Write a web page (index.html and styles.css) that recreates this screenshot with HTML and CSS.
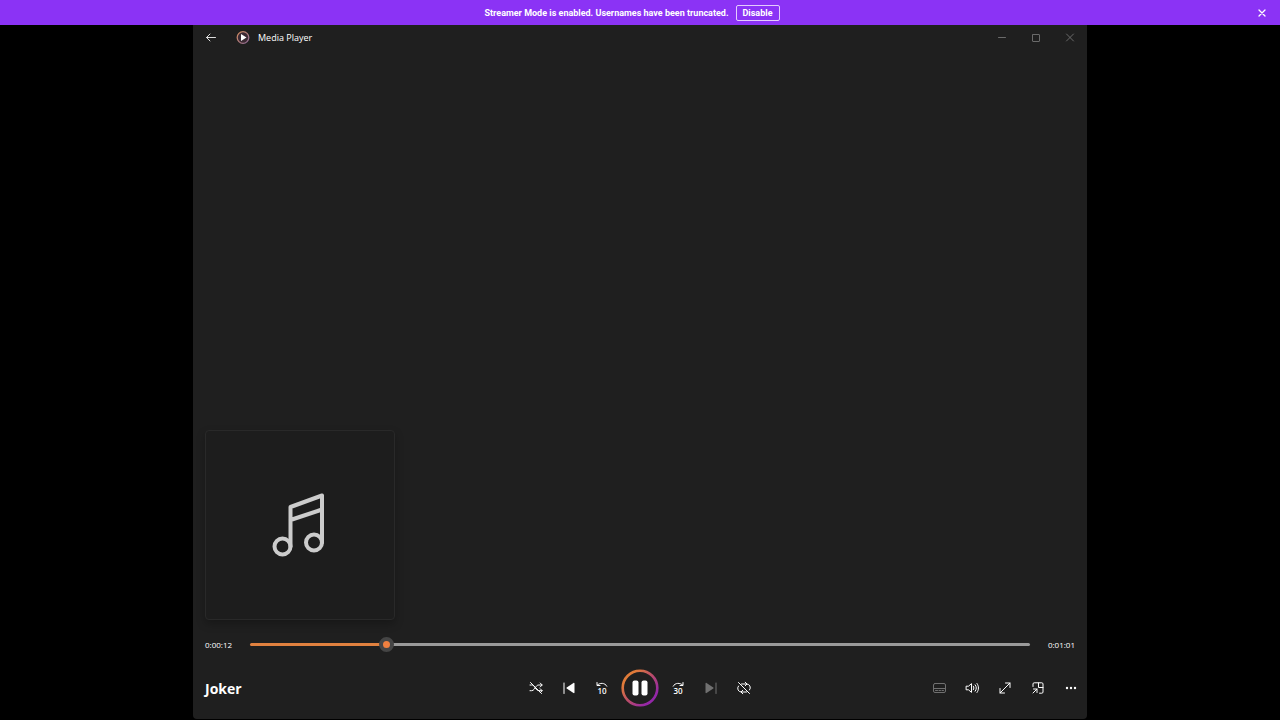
FILE: index.html
```html
<!DOCTYPE html>
<html lang="en">
<head>
    <meta charset="UTF-8">
    <meta name="viewport" content="width=device-width, initial-scale=1.0">
    <title>Media Player</title>
    <link rel="stylesheet" href="styles.css">
</head>
<body>
    <div class="notice">
        <div class="notice-text">
            <span>Streamer Mode is enabled. Usernames have been truncated.</span>
            <button class="notice-disable" type="button">Disable</button>
        </div>
        <button class="notice-close" type="button" aria-label="Close notice">
            <svg width="8" height="8" viewBox="0 0 8 8"><path d="M1 1l6 6M7 1L1 7" stroke-width="1.3"/></svg>
        </button>
    </div>

    <main class="window">
        <header class="titlebar">
            <button class="back" type="button" aria-label="Back">
                <svg width="12" height="12" viewBox="0 0 12 12"><path d="M10.5 5.5h-9M5 2L1.5 5.500 5 9"/></svg>
            </button>
            <svg class="app-icon" width="14" height="14" viewBox="0 0 14 14">
                <defs>
                    <linearGradient id="appRing" x1="0" y1="0" x2="1" y2="1">
                        <stop offset="0" stop-color="#d08a5c"/>
                        <stop offset="1" stop-color="#8d6a98"/>
                    </linearGradient>
                </defs>
                <circle cx="7" cy="6.5" r="5.8" fill="#3b2a33" stroke="url(#appRing)" stroke-width="1.3"/>
                <path d="M5 3v7l5.500-3.500z" fill="#fff" stroke="none"/>
            </svg>
            <h1>Media Player</h1>
            <div class="window-buttons">
                <button type="button" aria-label="Minimize">
                    <svg width="10" height="10" viewBox="0 0 10 10"><path d="M1.5 4.5h7"/></svg>
                </button>
                <button type="button" aria-label="Maximize">
                    <svg width="10" height="10" viewBox="0 0 10 10"><rect x="1.5" y="1.5" width="7" height="7" rx="0.5"/></svg>
                </button>
                <button type="button" aria-label="Close">
                    <svg width="10" height="10" viewBox="0 0 10 10"><path d="M1.5 1l7 7M8.5 1l-7 7"/></svg>
                </button>
            </div>
        </header>

        <section class="stage">
            <div class="cover">
                <svg width="58" height="66" viewBox="0 0 58 66">
                    <circle cx="11.5" cy="54.5" r="8"/>
                    <circle cx="43" cy="50.5" r="8"/>
                    <path d="M19.5 54.5V15L51 3.5v47M19.5 28L51 17.5"/>
                </svg>
            </div>
        </section>

        <div class="seek">
            <label for="position">0:00:12</label>
            <input class="seek-bar" id="position" type="range" min="0" max="61" step="0.1" value="10.3" style="--played: 17%">
            <span>0:01:01</span>
        </div>

        <footer class="controls">
            <h2>Joker</h2>
            <div class="transport">
                <button type="button" aria-label="Shuffle">
                    <svg width="16" height="16" viewBox="0 0 16 16"><path d="M2 5h1.500c1.200 0 2 .4 2.700 1.400l2 2.800c.7 1 1.600 1.500 2.800 1.500h3M2 10.700h1.500c1.200 0 2-.5 2.700-1.500l2-2.800C8.900 5.400 9.800 5 11 5h3M12.200 3L14.200 5l-2 2M12.200 8.700l2 2-2 2M2.500 2.500l11 11"/></svg>
                </button>
                <button type="button" aria-label="Previous">
                    <svg width="16" height="16" viewBox="0 0 16 16"><path d="M3 3v10.500"/><path class="solid" d="M13.500 3.400v9.200c0 .6-.6.8-1 .5L5.700 8.500a.6.6 0 0 1 0-1l6.800-4.600c.4-.3 1-.1 1 .5z"/></svg>
                </button>
                <button type="button" aria-label="Skip back 10 seconds">
                    <svg width="16" height="16" viewBox="0 0 16 16"><path d="M3 2.500v3h3M3.200 5.200C5.800 2.500 11 2.500 12.800 6.200"/><text x="8" y="14">10</text></svg>
                </button>
                <button class="pause" type="button" aria-label="Pause">
                    <svg width="38" height="38" viewBox="0 0 38 38">
                        <defs>
                            <linearGradient id="ring" x1="0.15" y1="0.25" x2="0.8" y2="0.85">
                                <stop offset="0" stop-color="#e07b39"/>
                                <stop offset="0.5" stop-color="#b84a6c"/>
                                <stop offset="1" stop-color="#9427a8"/>
                            </linearGradient>
                        </defs>
                        <circle cx="19" cy="19" r="17.3" stroke="url(#ring)" stroke-width="2.6"/>
                        <rect class="solid" x="11.5" y="11.5" width="6" height="15" rx="2"/>
                        <rect class="solid" x="20.5" y="11.5" width="6" height="15" rx="2"/>
                    </svg>
                </button>
                <button type="button" aria-label="Skip forward 30 seconds">
                    <svg width="16" height="16" viewBox="0 0 16 16"><path d="M13 2.500v3h-3M12.800 5.200C10.200 2.500 5 2.500 3.200 6.200"/><text x="8" y="14">30</text></svg>
                </button>
                <button type="button" aria-label="Next" disabled>
                    <svg width="16" height="16" viewBox="0 0 16 16"><path d="M13 3v10.500"/><path class="solid" d="M2.500 3.400v9.200c0 .6.6.8 1 .5l6.800-4.600a.6.6 0 0 0 0-1L3.500 2.900c-.4-.3-1-.1-1 .5z"/></svg>
                </button>
                <button type="button" aria-label="Repeat off">
                    <svg width="16" height="16" viewBox="0 0 16 16"><path d="M5.500 4h5a3.700 3.700 0 0 1 3 6M9.200 2.200L11 4 9.200 5.800M10.500 12h-5a3.700 3.700 0 0 1-3-6M6.800 10.200L5 12l1.800 1.800M2.500 2.500l11 11"/></svg>
                </button>
            </div>
            <div class="options">
                <button type="button" aria-label="Subtitles" disabled>
                    <svg width="16" height="16" viewBox="0 0 16 16"><rect x="2.5" y="3.5" width="12" height="9" rx="1.5"/><path d="M4.500 10.500h2M8 10.500h1.500M11 10.500h1.500M3 8.500h11"/></svg>
                </button>
                <button type="button" aria-label="Volume">
                    <svg width="16" height="16" viewBox="0 0 16 16"><path d="M2.500 6.200h2L7.500 3.600v8.800l-3-2.600h-2zM9.300 6.200c.8 1.100.8 2.500 0 3.600M11.200 4.800c1.500 2 1.500 4.400 0 6.400M13 3.500c2 2.800 2 6.200 0 9"/></svg>
                </button>
                <button type="button" aria-label="Full screen">
                    <svg width="16" height="16" viewBox="0 0 16 16"><path d="M3 13L13 3M8.500 3H13v4.500M3 8.500V13h4.500"/></svg>
                </button>
                <button type="button" aria-label="Mini player">
                    <svg width="16" height="16" viewBox="0 0 16 16"><path d="M3 6.500V4a1.200 1.200 0 0 1 1.200-1.200h7.600A1.200 1.200 0 0 1 13 4v8a1.200 1.200 0 0 1-1.200 1.200H9.500M8.500 3v4.500H13M3 13l4-4M3.500 9H7v3.500"/></svg>
                </button>
                <button type="button" aria-label="More options">
                    <svg width="16" height="16" viewBox="0 0 16 16"><circle class="solid" cx="4" cy="8" r="1.2"/><circle class="solid" cx="8" cy="8" r="1.2"/><circle class="solid" cx="12" cy="8" r="1.2"/></svg>
                </button>
            </div>
        </footer>
    </main>
</body>
</html>
```
FILE: styles.css
```css
* {
    box-sizing: border-box;
}
body {
    margin: 0;
    min-height: 100vh;
    display: flex;
    flex-direction: column;
    background-color: #000;
    color: #fff;
    font-family: "Open Sans", "Noto Sans", sans-serif;
    font-size: 9px;
}
button {
    display: flex;
    align-items: center;
    justify-content: center;
    padding: 0;
    border: none;
    background: none;
    color: inherit;
    font: inherit;
    cursor: pointer;
}
svg {
    display: block;
    fill: none;
    stroke: currentColor;
    stroke-linecap: round;
    stroke-linejoin: round;
}
.solid {
    fill: currentColor;
    stroke: none;
}

/* Streamer mode notice */
.notice {
    display: flex;
    align-items: center;
    height: 25px;
    padding: 0 10px;
    background-color: #8b33f5;
    font-family: Roboto, sans-serif;
    font-weight: 700;
}
.notice-text {
    flex: 1;
    display: flex;
    align-items: center;
    justify-content: center;
    gap: 7px;
}
.notice-disable {
    height: 16px;
    padding: 0 6px;
    border: 1px solid #e4ccfd;
    border-radius: 2px;
}
.notice-close {
    width: 16px;
    height: 16px;
}

/* Player window */
.window {
    flex: 1;
    display: flex;
    flex-direction: column;
    width: 100%;
    max-width: 894px;
    margin: 0 auto 1px;
    background-color: #1f1f1f;
    border-radius: 0 0 4px 4px;
}
.titlebar {
    display: flex;
    align-items: center;
    height: 25px;
}
.titlebar h1 {
    margin: 0 0 0 8px;
    font-size: 9px;
    font-weight: 500;
}
.back {
    width: 35px;
    height: 25px;
    color: #ddd;
}
.app-icon {
    margin-left: 8px;
}
.window-buttons {
    display: flex;
    margin-left: auto;
    color: #6a6a6a;
}
.window-buttons button {
    width: 34px;
    height: 25px;
}

.stage {
    flex: 1;
    display: flex;
    align-items: flex-end;
    padding: 12px;
}
.cover {
    display: flex;
    align-items: center;
    justify-content: center;
    width: 190px;
    height: 190px;
    border: 1px solid #292929;
    border-radius: 4px;
    background-color: #1d1d1d;
    box-shadow: 0 4px 8px rgba(0, 0, 0, 0.25);
    color: #ccc;
}
.cover svg {
    stroke-width: 4px;
}

.seek {
    display: flex;
    align-items: center;
    gap: 18px;
    height: 25px;
    padding: 0 12px;
    font-size: 8px;
    font-weight: 500;
}
.seek-bar {
    flex: 1;
    height: 15px;
    margin: 0;
    background: none;
    appearance: none;
}
.seek-bar::-webkit-slider-runnable-track {
    height: 3px;
    border-radius: 2px;
    background: linear-gradient(to right, #e0813f var(--played), #9a9a9a var(--played));
}
.seek-bar::-webkit-slider-thumb {
    appearance: none;
    width: 15px;
    height: 15px;
    margin-top: -6px;
    border: 4px solid #454545;
    border-radius: 50%;
    background-color: #f08040;
}

.controls {
    display: grid;
    grid-template-columns: 1fr auto 1fr;
    align-items: center;
    height: 62px;
}
.controls h2 {
    margin: 0;
    padding-left: 12px;
    font-size: 14px;
    font-weight: 700;
}
.controls button {
    width: 33px;
    height: 40px;
}
.controls .pause {
    width: 43px;
}
.controls button:disabled {
    color: #707070;
}
.controls text {
    fill: currentColor;
    stroke: none;
    font-size: 8px;
    font-weight: 600;
    text-anchor: middle;
}
.transport,
.options {
    display: flex;
    align-items: center;
}
.options {
    justify-content: flex-end;
}
```
